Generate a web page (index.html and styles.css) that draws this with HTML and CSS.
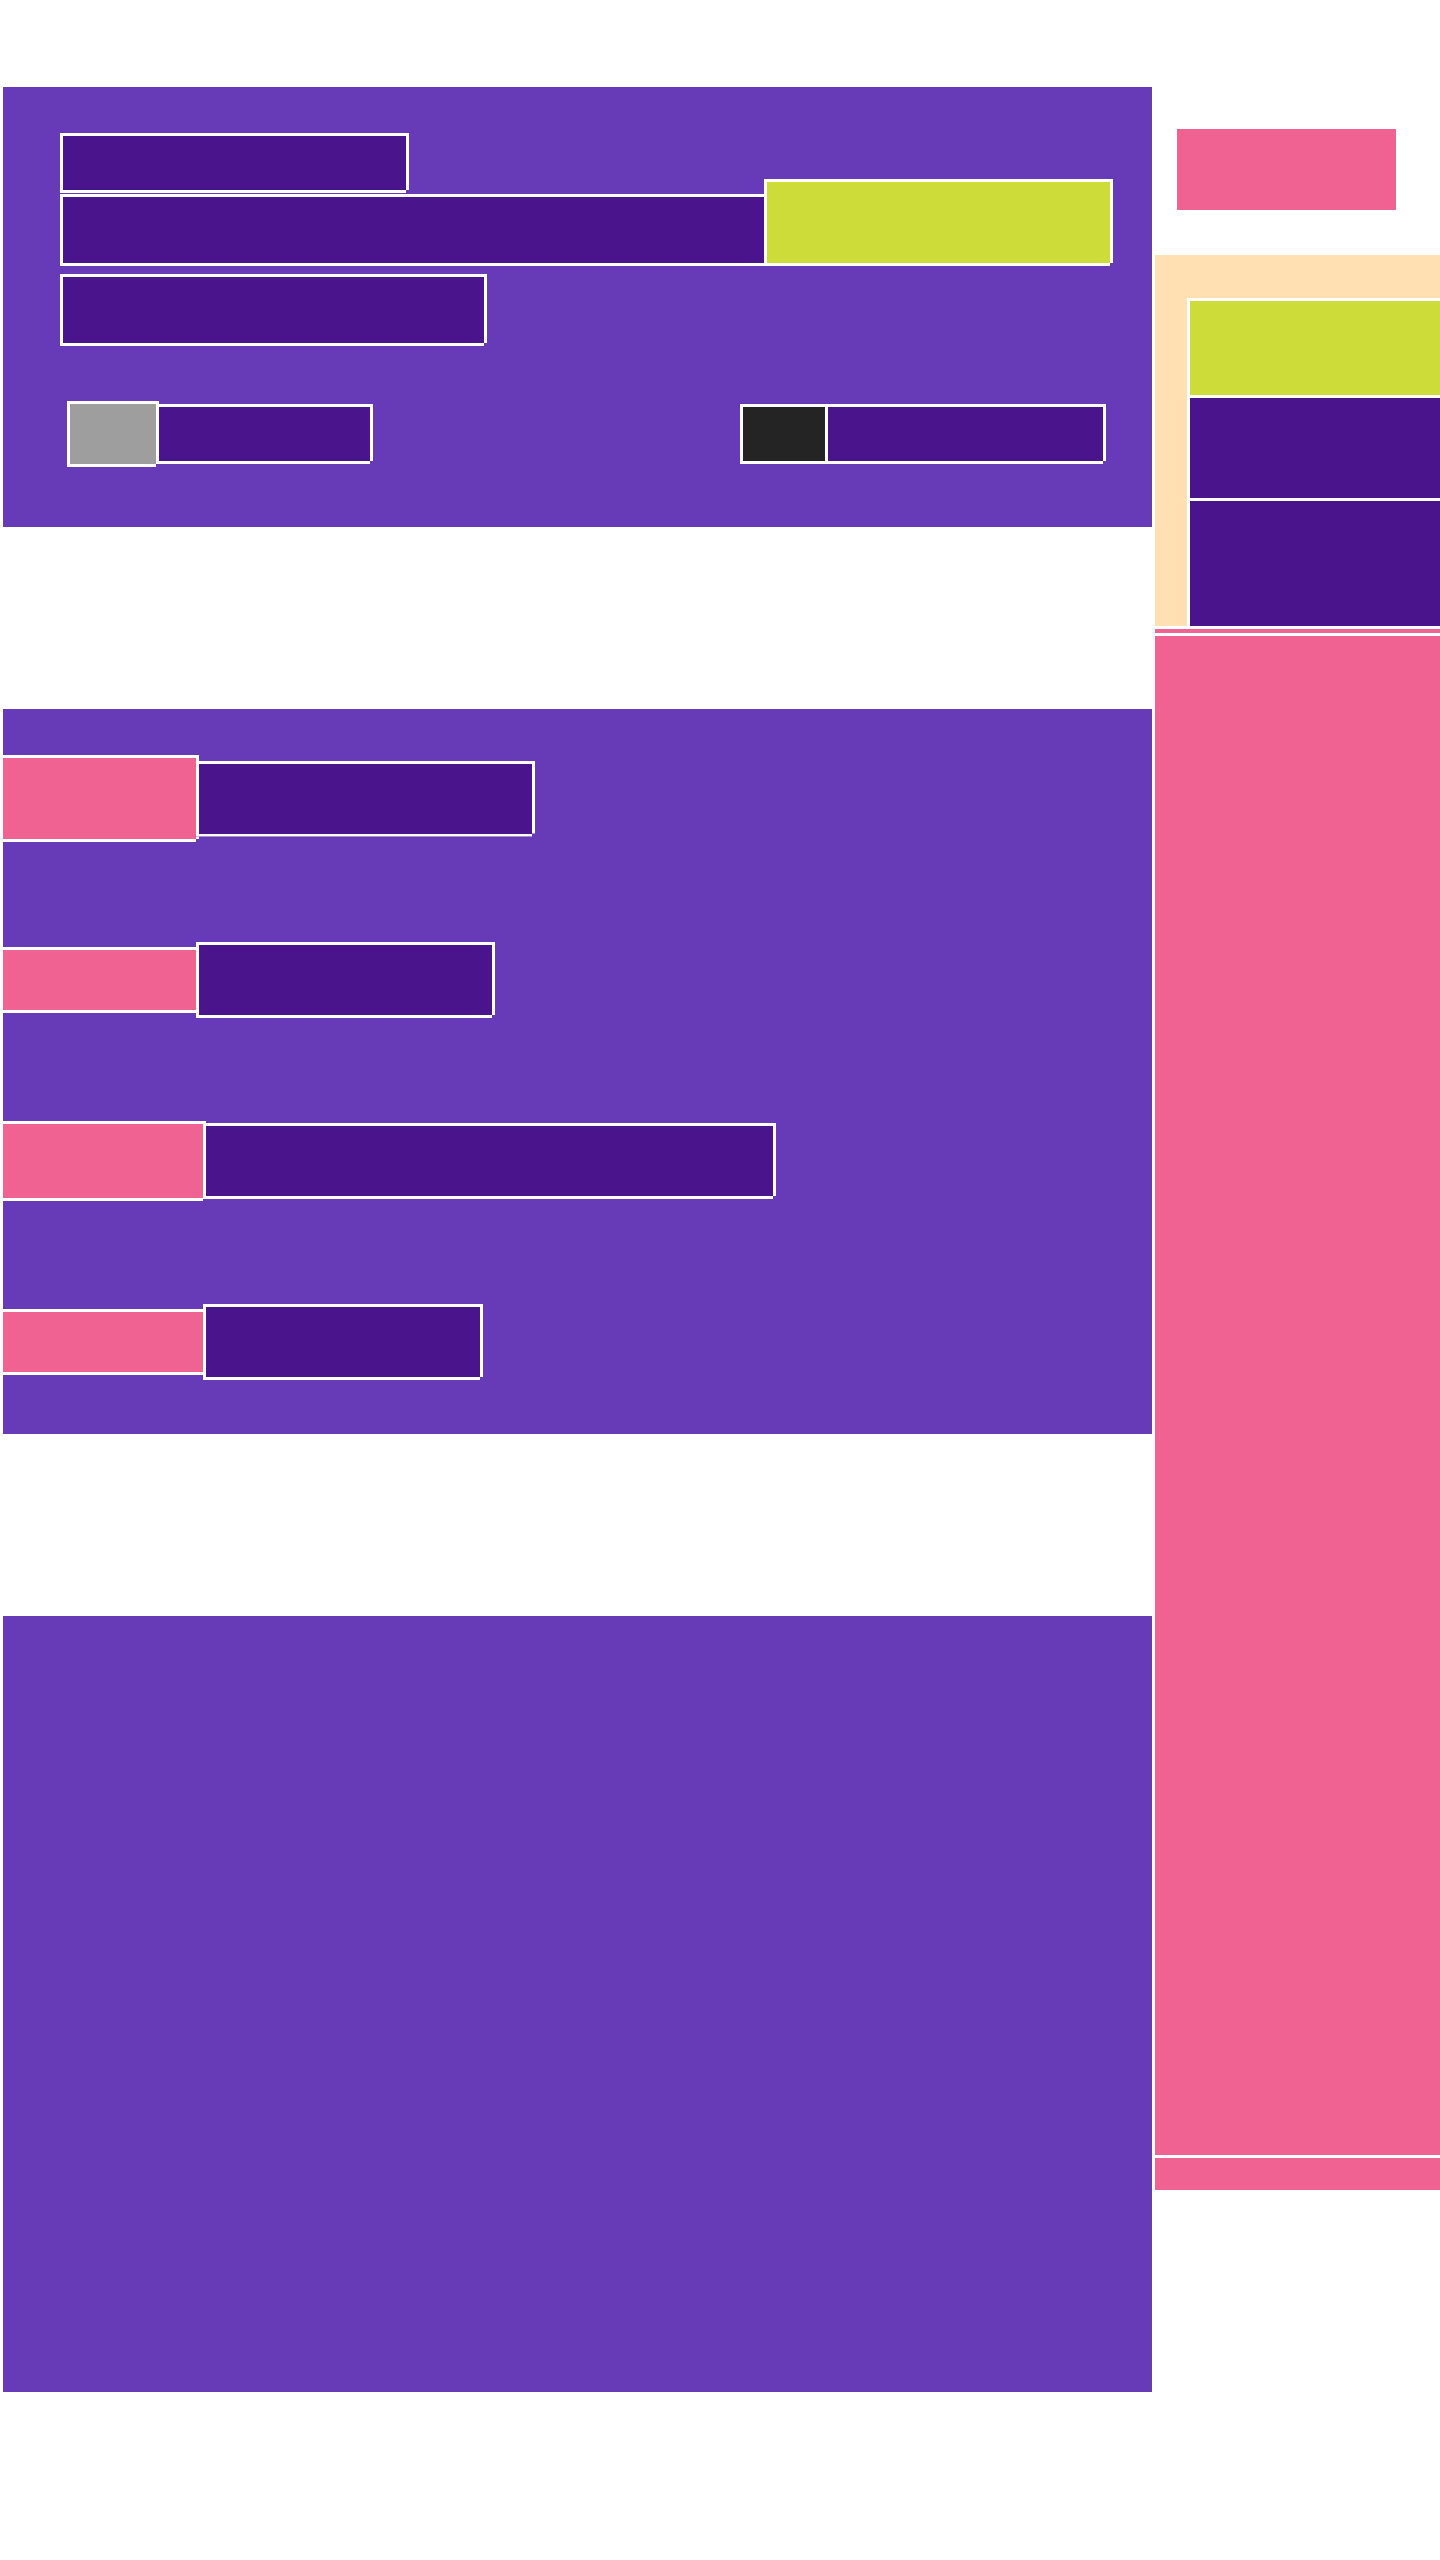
FILE: index.html
```html
<!DOCTYPE html>
<html lang="en">
<head>
<meta charset="utf-8">
<title>Layout</title>
<link rel="stylesheet" href="styles.css">
</head>
<body>
<div class="page">
  <main class="main">
    <section class="panel panel-hero">
      <div class="blk blk-dark hero-title"></div>
      <div class="hero-row">
        <div class="blk blk-dark hero-sub"></div>
        <div class="blk blk-lime hero-cta"></div>
      </div>
      <div class="blk blk-dark hero-meta"></div>
      <div class="hero-foot">
        <div class="pair">
          <div class="blk blk-gray avatar"></div>
          <div class="blk blk-dark pair-label pair-label-s"></div>
        </div>
        <div class="pair">
          <div class="blk blk-black chip"></div>
          <div class="blk blk-dark pair-label pair-label-l"></div>
        </div>
      </div>
    </section>

    <section class="panel panel-list">
      <div class="item item-1">
        <div class="blk blk-pink tag tag-1"></div>
        <div class="blk blk-dark label label-1"></div>
      </div>
      <div class="item item-2">
        <div class="blk blk-pink tag tag-2"></div>
        <div class="blk blk-dark label label-2"></div>
      </div>
      <div class="item item-3">
        <div class="blk blk-pink tag tag-3"></div>
        <div class="blk blk-dark label label-3"></div>
      </div>
      <div class="item item-4">
        <div class="blk blk-pink tag tag-4"></div>
        <div class="blk blk-dark label label-4"></div>
      </div>
    </section>

    <section class="panel panel-empty"></section>
  </main>

  <aside class="side">
    <div class="side-badge"></div>
    <div class="side-card">
      <div class="blk blk-lime stack-item stack-lime"></div>
      <div class="blk blk-dark stack-item stack-d1"></div>
      <div class="blk blk-dark stack-item stack-d2"></div>
    </div>
    <div class="side-list">
      <div class="side-list-inner"></div>
    </div>
  </aside>
</div>
</body>
</html>
```

FILE: styles.css
```css
* {
  box-sizing: border-box;
}

html,
body {
  margin: 0;
  padding: 0;
  background: #ffffff;
}

body {
  font-family: "Liberation Sans", Arial, sans-serif;
  overflow: hidden;
}

.page {
  display: flex;
  align-items: flex-start;
  gap: 3px;
  width: 1440px;
  padding-left: 3px;
}

.main {
  width: 1149px;
  flex: none;
  padding-top: 87px;
  display: flex;
  flex-direction: column;
  gap: 182px;
}

.panel {
  background: #673ab7;
}

/* generic outlined block */
.blk {
  flex: none;
  border: 3px solid #ffffff;
  clip-path: polygon(0 0, 100% 0, 100% calc(100% - 3px), calc(100% - 3px) calc(100% - 3px), calc(100% - 3px) 100%, 0 100%);
}

.blk-dark { background: #4a148c; }
.blk-lime { background: #cddc39; }
.blk-pink { background: #f06292; }
.blk-gray { background: #9e9e9e; }
.blk-black { background: #242424; }

/* hero panel */
.panel-hero {
  height: 440px;
  padding: 46px 0 0 57px;
}

.hero-title {
  width: 349px;
  height: 60px;
}

.hero-row {
  display: flex;
  align-items: flex-end;
  margin-top: -14px;
}

.hero-sub {
  width: 707px;
  height: 72px;
}

.hero-cta {
  width: 349px;
  height: 87px;
  margin-left: -3px;
}

.hero-meta {
  width: 427px;
  height: 72px;
  margin-top: 8px;
}

.hero-foot {
  display: flex;
  justify-content: space-between;
  align-items: center;
  width: 1039px;
  margin: 55px 0 0 7px;
}

.pair {
  display: flex;
  align-items: center;
}

.avatar {
  width: 92px;
  height: 66px;
}

.chip {
  width: 88px;
  height: 60px;
}

.pair-label {
  height: 60px;
  margin-left: -3px;
}

.pair-label-s { width: 217px; }
.pair-label-l { width: 281px; }

/* list panel */
.panel-list {
  height: 725px;
  padding-top: 46px;
}

.item {
  display: flex;
  align-items: center;
  margin-left: -3px;
}

.item-2 { margin-top: 100px; }
.item-3 { margin-top: 103px; }
.item-4 { margin-top: 103px; }

.label {
  height: 76px;
  margin-left: -3px;
}

.tag-1 { width: 199px; height: 87px; }
.tag-2 { width: 199px; height: 66px; }
.tag-3 { width: 206px; height: 80px; }
.tag-4 { width: 206px; height: 66px; }

.label-1 { width: 339px; }
.label-2 { width: 299px; }
.label-3 { width: 573px; }
.label-4 { width: 280px; }

/* empty panel */
.panel-empty {
  height: 776px;
}

/* sidebar */
.side {
  width: 285px;
  flex: none;
  overflow: hidden;
  padding-top: 129px;
}

.side-badge {
  width: 219px;
  height: 81px;
  margin-left: 22px;
  background: #f06292;
}

.side-card {
  margin-top: 45px;
  height: 371px;
  background: #ffe0b2;
  padding: 43px 0 0 32px;
}

.stack-item {
  width: 262px;
}

.stack-lime {
  height: 100px;
}

.stack-d1 {
  height: 106px;
  margin-top: -3px;
}

.stack-d2 {
  height: 131px;
  margin-top: -3px;
}

.side-list {
  background: #f06292;
  border-top: 3px solid #ffffff;
  padding: 4px 0 32px;
}

.side-list-inner {
  height: 1525px;
  border-top: 3px solid #ffffff;
  border-bottom: 3px solid #ffffff;
}
```
